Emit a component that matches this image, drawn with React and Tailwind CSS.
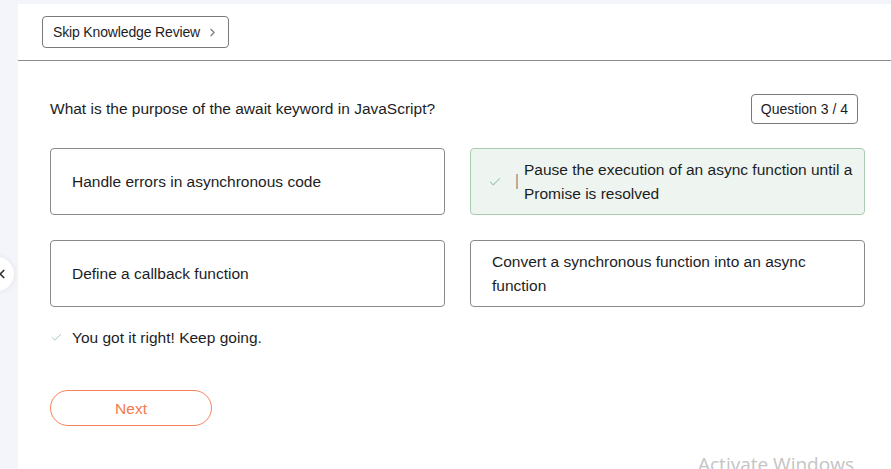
import React from "react";
import { ChevronRight, ChevronLeft, Check } from "lucide-react";

const options = [
  { text: "Handle errors in asynchronous code" },
  { text: "Pause the execution of an async function until a Promise is resolved", correct: true },
  { text: "Define a callback function" },
  { text: "Convert a synchronous function into an async function" },
];

export default function App() {
  return (
    <div
      className="relative h-[469px] w-[891px] overflow-hidden bg-[#f4f5fa] pl-[18px] pt-[4px] text-[#1d1d1f]"
      style={{ fontFamily: '"Liberation Sans", Arial, sans-serif' }}
    >
      {/* Prev arrow */}
      <button className="absolute left-[-20px] top-[257px] flex h-[34px] w-[34px] items-center justify-center rounded-full bg-white shadow-[0_0_6px_rgba(0,0,0,0.08)]">
        <ChevronLeft className="h-[14px] w-[14px] translate-x-[5px] text-[#333]" strokeWidth={3} />
      </button>

      <div className="h-full bg-white">
        {/* Header */}
        <div className="flex h-[57px] items-start border-b border-[#8c8c8c] pl-[24px] pt-[12px]">
          <button className="flex h-[32px] items-center gap-[6px] rounded-[4px] border border-[#7a7a7a] pl-[10px] pr-[9px] text-[14px] tracking-[-0.15px]">
            Skip Knowledge Review
            <ChevronRight className="h-[13px] w-[13px] text-[#777]" strokeWidth={2} />
          </button>
        </div>

        <div className="pl-[32px] pr-[26px] pt-[33px]">
          {/* Question row */}
          <div className="flex items-center justify-between">
            <p className="text-[15.5px]">What is the purpose of the await keyword in JavaScript?</p>
            <span className="mr-[7px] flex h-[30px] items-center rounded-[4px] border border-[#7a7a7a] px-[9px] text-[14px]">
              Question 3 / 4
            </span>
          </div>

          {/* Options */}
          <div className="mt-[24px] grid grid-cols-2 gap-x-[25px] gap-y-[25px]">
            {options.map((o, i) =>
              o.correct ? (
                <div
                  key={i}
                  className="flex h-[67px] items-center rounded-[4px] border border-[#a9cdb1] bg-[#eef5f0] pl-[17px] pr-[4px]"
                >
                  <Check className="h-[14px] w-[14px] shrink-0 text-[#9cc4a4]" strokeWidth={1.75} />
                  <span className="ml-[14px] h-[15px] w-[2px] shrink-0 bg-[#c9a78a]" />
                  <span className="ml-[6px] text-[15.5px] leading-[24px]">{o.text}</span>
                </div>
              ) : (
                <div
                  key={i}
                  className="flex h-[67px] items-center rounded-[4px] border border-[#8a8a8a] pl-[21px] pr-[40px] text-[15.5px] leading-[24px]"
                >
                  {o.text}
                </div>
              )
            )}
          </div>

          {/* Feedback */}
          <div className="mt-[19px] flex items-center gap-[9px]">
            <Check className="h-[13px] w-[13px] text-[#a6c7ae]" strokeWidth={1.75} />
            <span className="text-[15.5px]">You got it right! Keep going.</span>
          </div>

          <button className="mt-[41px] flex h-[36px] w-[162px] items-center justify-center rounded-full border border-[#f5835a] text-[15.5px] text-[#f27a4e]">
            Next
          </button>
        </div>
      </div>

      <div
        className="absolute left-[698px] top-[450px] text-[19px] text-[#c4c4c4]"
        style={{ fontFamily: '"Open Sans", sans-serif' }}
      >
        Activate Windows
      </div>
    </div>
  );
}
